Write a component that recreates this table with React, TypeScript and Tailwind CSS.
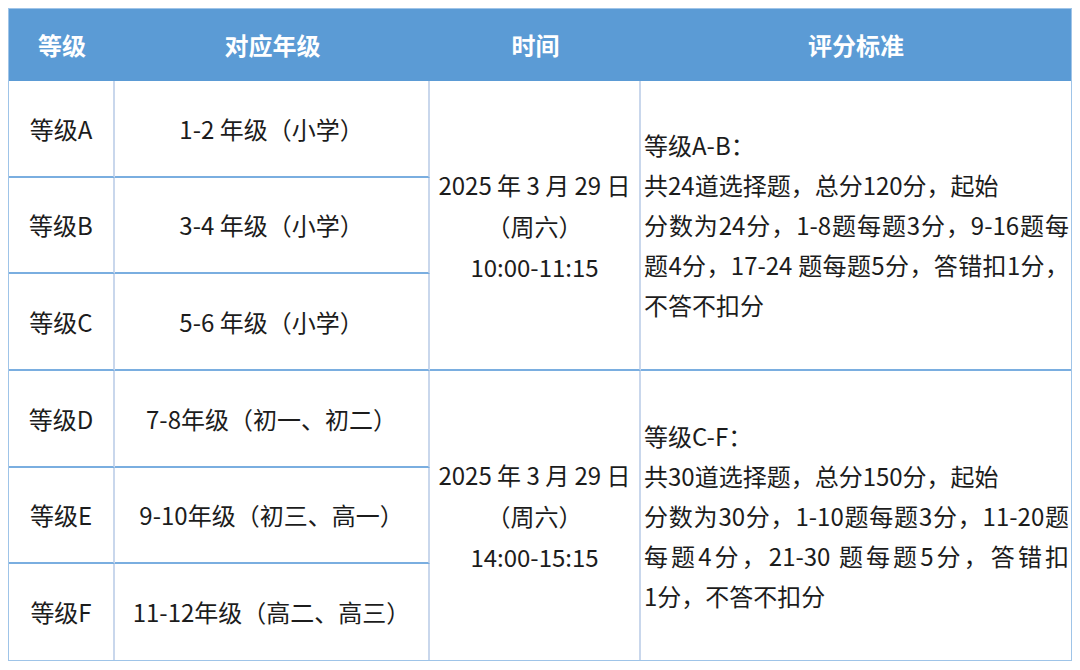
import React from "react";

const font = { fontFamily: '"Noto Sans CJK SC", "Noto Sans", sans-serif' };

const HB = "border-b-2 border-b-[#7aaee0]";
const VR = "border-r-2 border-r-[#c9d7ec]";
const J = "whitespace-nowrap text-justify [text-align-last:justify] [text-justify:inter-character]";

function GradeRow({ g, y, last }: { g: string; y: string; last?: boolean }) {
  return (
    <>
      <div className={`flex items-center justify-center ${VR} ${last ? "" : HB}`}>{g}</div>
      <div className={`flex items-center justify-center ${VR} ${last ? "" : HB}`}>{y}</div>
    </>
  );
}

export default function App() {
  return (
    <div className="w-[1080px] h-[670px] bg-white pt-2 pl-2" style={font}>
      <div
        className="w-[1064px] border border-[#9fc4e8] grid text-[24px] leading-[40px] text-[#1c1c1c]"
        style={{
          gridTemplateColumns: "106px 315px 211px 1fr",
          gridTemplateRows: "72px 97px 96px 97px 97px 96px 96px",
        }}
      >
        {/* Header */}
        <div className="col-span-4 grid grid-cols-[106px_315px_211px_1fr] bg-[#5b9bd5] text-white font-bold">
          <div className="flex items-center justify-center">等级</div>
          <div className="flex items-center justify-center">对应年级</div>
          <div className="flex items-center justify-center">时间</div>
          <div className="flex items-center justify-center">评分标准</div>
        </div>

        {/* Group 1 */}
        <GradeRow g="等级A" y="1-2 年级（小学）" />
        <div className={`row-span-3 flex flex-col items-center justify-center leading-[41px] ${VR} ${HB}`}>
          <div className="whitespace-pre">2025 年 3 月 29 日</div>
          <div>（周六）</div>
          <div>10:00-11:15</div>
        </div>
        <div className={`row-span-3 flex flex-col justify-center pl-[3px] pr-[2px] ${HB}`}>
          <div className="whitespace-nowrap">等级A-B：</div>
          <div className="whitespace-nowrap">共24道选择题，总分120分，起始</div>
          <div className={J}>分数为24分，1-8题每题3分，9-16题每</div>
          <div className={J}>题4分，17-24 题每题5分，答错扣1分，</div>
          <div className="whitespace-nowrap">不答不扣分</div>
        </div>
        <GradeRow g="等级B" y="3-4 年级（小学）" />
        <div className={`flex items-center justify-center ${VR} ${HB}`}>等级C</div>
        <div className={`flex items-center justify-center ${VR} ${HB}`}>5-6 年级（小学）</div>

        {/* Group 2 */}
        <GradeRow g="等级D" y="7-8年级（初一、初二）" />
        <div className={`row-span-3 flex flex-col items-center justify-center leading-[41px] ${VR}`}>
          <div className="whitespace-pre">2025 年 3 月 29 日</div>
          <div>（周六）</div>
          <div>14:00-15:15</div>
        </div>
        <div className="row-span-3 flex flex-col justify-center pl-[3px] pr-[2px]">
          <div className="whitespace-nowrap">等级C-F：</div>
          <div className="whitespace-nowrap">共30道选择题，总分150分，起始</div>
          <div className={J}>分数为30分，1-10题每题3分，11-20题</div>
          <div className={J}>每题4分，21-30 题每题5分，答错扣</div>
          <div className="whitespace-nowrap">1分，不答不扣分</div>
        </div>
        <GradeRow g="等级E" y="9-10年级（初三、高一）" />
        <GradeRow g="等级F" y="11-12年级（高二、高三）" last />
      </div>
    </div>
  );
}
